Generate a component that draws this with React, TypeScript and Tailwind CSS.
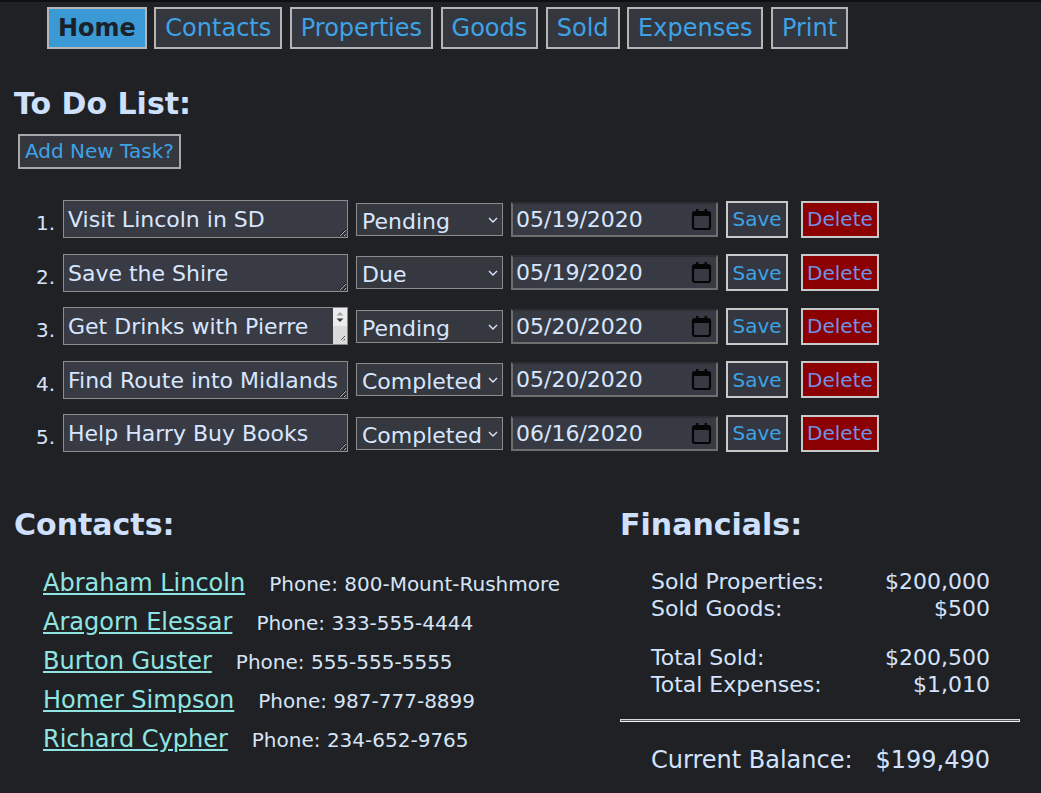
import { useState } from 'react';

const navItems = ['Home', 'Contacts', 'Properties', 'Goods', 'Sold', 'Expenses', 'Print'];

const tasks = [
  { text: 'Visit Lincoln in SD', status: 'Pending', date: '05/19/2020' },
  { text: 'Save the Shire', status: 'Due', date: '05/19/2020' },
  { text: 'Get Drinks with Pierre', status: 'Pending', date: '05/20/2020' },
  { text: 'Find Route into Midlands', status: 'Completed', date: '05/20/2020' },
  { text: 'Help Harry Buy Books', status: 'Completed', date: '06/16/2020' },
];

const contacts = [
  { name: 'Abraham Lincoln', phone: '800-Mount-Rushmore' },
  { name: 'Aragorn Elessar', phone: '333-555-4444' },
  { name: 'Burton Guster', phone: '555-555-5555' },
  { name: 'Homer Simpson', phone: '987-777-8899' },
  { name: 'Richard Cypher', phone: '234-652-9765' },
];

function CalendarIcon() {
  return (
    <svg width="21" height="23" viewBox="0 0 21 23" className="flex-none">
      <rect x="2" y="4" width="17" height="17" rx="2" fill="none" stroke="#050505" strokeWidth="2.2" />
      <rect x="2" y="4" width="17" height="4" fill="#050505" />
      <rect x="5" y="1" width="2.4" height="5" fill="#050505" />
      <rect x="13.6" y="1" width="2.4" height="5" fill="#050505" />
    </svg>
  );
}

// the tiny scrollbar + resize corner shown on the overflowing task
function MiniScrollbar() {
  return (
    <svg width="14" height="36" viewBox="0 0 14 36" className="pointer-events-none absolute right-[1px] top-[1px]">
      <rect x="0" y="0" width="14" height="18" fill="#ececec" />
      <path d="M3.5 7.5L7 4l3.5 3.5z" fill="#a3a3a3" />
      <path d="M3.5 10.5L7 14l3.5-3.5z" fill="#3a3a3a" />
      <rect x="0" y="18" width="14" height="18" fill="#dadada" />
      <path d="M12 28l-4 4M12 31l-1.5 1.5" stroke="#555" strokeWidth="1" />
    </svg>
  );
}

function TaskRow({ n, task }: { n: number; task: (typeof tasks)[number] }) {
  const [text, setText] = useState(task.text);
  const [status, setStatus] = useState(task.status);
  return (
    <li className="flex items-center">
      <span className="w-[41px] flex-none self-end text-right text-[20px] text-[#d3e3fd]">{n}.</span>
      <div className="relative ml-2 flex-none">
        <textarea
          value={text}
          onChange={(e) => setText(e.target.value)}
          rows={1}
          className="block h-[38px] w-[285px] resize border border-[#8c8c8c] bg-[#383b44] px-[4px] py-[2px] text-[22px] text-[#d8e6ff] outline-none"
        />
        {n === 3 && <MiniScrollbar />}
      </div>
      <div className="relative ml-2 flex-none">
        <select
          value={status}
          onChange={(e) => setStatus(e.target.value)}
          className="h-[33px] w-[147px] appearance-none border border-[#8c8c8c] bg-[#35383f] pl-[5px] pt-[4px] text-[22px] leading-[25px] text-[#d8e6ff] outline-none"
        >
          <option>Pending</option>
          <option>Due</option>
          <option>Completed</option>
        </select>
        <svg width="10" height="6" viewBox="0 0 10 6" className="pointer-events-none absolute right-[5px] top-[14px]">
          <path d="M1 1l4 4 4-4" fill="none" stroke="#d8e6ff" strokeWidth="1.4" />
        </svg>
      </div>
      <div className="ml-[8px] flex h-[35px] w-[207px] flex-none items-center justify-between border-2 border-[#6e6e6e] border-t-[#2c2e33] bg-[#373a42] pl-[3px] pr-[4px] text-[22px] text-[#d8e6ff]">
        <span>{task.date}</span>
        <CalendarIcon />
      </div>
      <button className="ml-[8px] h-[37px] border-2 border-[#c8c8c8] bg-[#34373f] px-[4.5px] text-[20px] text-[#3ea2e6]">
        Save
      </button>
      <button className="ml-[13px] h-[37px] border-2 border-[#c8c8c8] bg-[#8b0000] px-[4px] text-[20px] text-[#7193e6]">
        Delete
      </button>
    </li>
  );
}

function MoneyRow({ label, value }: { label: string; value: string }) {
  return (
    <div className="flex justify-between leading-[27px]">
      <span>{label}</span>
      <span>{value}</span>
    </div>
  );
}

export default function App() {
  return (
    <div className="min-h-screen border-t-2 border-[#0e0f11] bg-[#202124] font-['DejaVu_Sans',sans-serif] text-[#d3e3fd]">
      <nav className="flex gap-[7.5px] pl-[47px] pt-[5px]">
        {navItems.map((item, i) => (
          <button
            key={item}
            className={
              i === 0
                ? 'border-2 border-[#b5b5b5] bg-[#3b9ad6] px-[9px] py-[5px] text-[24px] font-bold leading-[28px] text-[#1b2129]'
                : 'border-2 border-[#b5b5b5] bg-[#35373f] px-[9px] py-[5px] text-[24px] leading-[28px] text-[#3ea2e6]'
            }
          >
            {item}
          </button>
        ))}
      </nav>

      <main className="px-[14px]">
        <h2 className="mt-[38px] text-[30px] font-bold leading-[34px] text-[#cfe0fc]">To Do List:</h2>
        <button className="ml-[4px] mt-[13px] border-2 border-[#a8a8a8] bg-[#35373f] px-[5px] py-[4px] text-[20px] leading-[23px] text-[#3ea2e6]">
          Add New Task?
        </button>

        <ol className="mt-[31px] flex flex-col gap-[15.5px]">
          {tasks.map((t, i) => (
            <TaskRow key={i} n={i + 1} task={t} />
          ))}
        </ol>

        <div className="mt-[56px] flex">
          <section className="w-[606px] flex-none">
            <h2 className="text-[30px] font-bold leading-[34px] text-[#cfe0fc]">Contacts:</h2>
            <ul className="mt-[22px] pl-[29px]">
              {contacts.map((c) => (
                <li key={c.name} className="flex h-[39px] items-baseline gap-[24px] leading-[39px]">
                  <a href="#" className="text-[24px] text-[#8fe5e2] underline">
                    {c.name}
                  </a>
                  <span className="text-[20px] text-[#d6e4f7]">Phone: {c.phone}</span>
                </li>
              ))}
            </ul>
          </section>

          <section className="w-[400px] flex-none">
            <h2 className="text-[30px] font-bold leading-[34px] text-[#cfe0fc]">Financials:</h2>
            <div className="mt-[26px] pl-[31px] pr-[30px] text-[22px]">
              <MoneyRow label="Sold Properties:" value="$200,000" />
              <MoneyRow label="Sold Goods:" value="$500" />
              <div className="mt-[22px]">
                <MoneyRow label="Total Sold:" value="$200,500" />
                <MoneyRow label="Total Expenses:" value="$1,010" />
              </div>
            </div>
            <div className="mt-[21px] h-[3px] border border-[#d8d8d8] border-b-[#f4f4f4] bg-[#5c5c5c]" />
            <div className="mt-[24px] flex justify-between pl-[31px] pr-[30px] text-[24px] leading-[28px]">
              <span>Current Balance:</span>
              <span>$199,490</span>
            </div>
          </section>
        </div>
      </main>
    </div>
  );
}
